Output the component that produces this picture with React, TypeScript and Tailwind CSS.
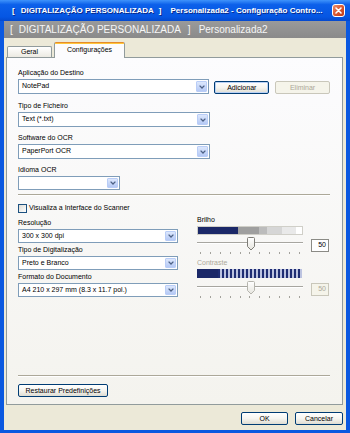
import React from 'react'

// small XP-style helpers

function Label({ children, disabled }: { children: React.ReactNode; disabled?: boolean }) {
    return (
        <div className={`h-[9px] text-[7px] leading-[9px] whitespace-nowrap ${disabled ? 'text-[#aca899]' : 'text-black'}`}>
            {children}
        </div>
    )
}

function Combo({ value, className }: { value: string; className: string }) {
    return (
        <div className={`flex items-stretch border border-[#7f9db9] bg-white p-px ${className}`}>
            <span className="flex flex-1 items-center overflow-hidden whitespace-nowrap pl-[2px] text-[7px] text-black">{value}</span>
            <span className="flex w-[11px] items-center justify-center rounded-[1px] border border-[#b9cdf7] bg-gradient-to-b from-[#dce7fc] to-[#b5c9f5]">
                <svg width="6" height="4" viewBox="0 0 6 4">
                    <path d="M0.6 0.6 L3 3 L5.4 0.6" stroke="#4d6185" strokeWidth="1.3" fill="none" />
                </svg>
            </span>
        </div>
    )
}

function XpButton({ children, className, disabled }: { children: React.ReactNode; className: string; disabled?: boolean }) {
    return (
        <div
            className={`flex items-center justify-center rounded-[2px] border text-[7px] leading-none ${
                disabled
                    ? 'border-[#c9c7ba] bg-[#f5f4ea] text-[#aca899]'
                    : 'border-[#003c74] bg-gradient-to-b from-white via-[#f6f5f0] to-[#dedcd2] text-black'
            } ${className}`}
        >
            {children}
        </div>
    )
}

function Slider({ disabled }: { disabled?: boolean }) {
    return (
        <div className="flex items-start">
            <div className="relative h-[17px] w-[106px]">
                <div className="mt-[5px] h-px w-full bg-[#a7a6a0]" />
                <div className="h-px w-full bg-white" />
                <div className="mt-[8px] flex justify-between px-[3px]">
                    {Array.from({ length: 11 }).map((_, i) => (
                        <span key={i} className="h-[2px] w-px bg-[#a3a29c]" />
                    ))}
                </div>
                {/* thumb */}
                <svg className="absolute left-[50px] top-0" width="8" height="14" viewBox="0 0 8 14">
                    <defs>
                        <linearGradient id={disabled ? 'tg2' : 'tg1'} x1="0" y1="0" x2="0" y2="1">
                            <stop offset="0" stopColor="#ffffff" />
                            <stop offset="1" stopColor="#e6e5de" />
                        </linearGradient>
                    </defs>
                    <path
                        d="M0.5 1.5 Q0.5 0.5 1.5 0.5 H6.5 Q7.5 0.5 7.5 1.5 V9.5 L4 13 L0.5 9.5 Z"
                        fill={`url(#${disabled ? 'tg2' : 'tg1'})`}
                        stroke={disabled ? '#b5b4ad' : '#7e7d77'}
                        strokeWidth="1"
                    />
                </svg>
            </div>
            <div
                className={`ml-[8px] mt-[2px] flex h-[13px] w-[18px] items-center justify-end border pr-[2px] text-[7px] ${
                    disabled ? 'border-[#c9c7ba] bg-[#f5f4ea] text-[#aca899]' : 'border-[#8b8b86] bg-white text-black'
                }`}
            >
                50
            </div>
        </div>
    )
}

function BrightnessBar() {
    return (
        <div className="flex h-[9px] w-[106px] border border-[#d0cfc8]">
            <span className="w-[40px] bg-[#1b2868]" />
            <span className="w-[21px] bg-[#9f9f9f]" />
            <span className="w-[8px] bg-[#bcbcbc]" />
            <span className="w-[15px] bg-[#d6d6d6]" />
            <span className="w-[14px] bg-[#e9e9e9]" />
            <span className="flex-1 bg-white" />
        </div>
    )
}

function ContrastBar() {
    return (
        <div className="flex h-[9px] w-[106px]">
            <span className="w-[21px] bg-[#1b2868]" />
            {Array.from({ length: 21 }).map((_, i) => (
                <span key={i} className="flex w-[4px]">
                    <span className="w-[2px] bg-[#1f2d73]" />
                    <span className="w-[2px] bg-[#bcc3e0]" />
                </span>
            ))}
        </div>
    )
}

export default function App() {
    return (
        <div className="flex h-[433px] w-[350px] flex-col bg-[#0a58e0] font-['Liberation_Sans',Arial,sans-serif]">

            {/* Title bar */}
            <div className="flex h-[21px] items-center bg-[linear-gradient(180deg,#3f93fb_0%,#0c60ea_22%,#0556e3_80%,#0449ce_100%)] pl-[12px] pr-[5px]">
                <div className="flex flex-1 whitespace-nowrap text-[8px] font-bold text-white [text-shadow:1px_1px_0_#0a2a8a]">
                    <span>[</span>
                    <span className="ml-[6px]">DIGITALIZAÇÃO PERSONALIZADA</span>
                    <span className="ml-[5px]">]</span>
                    <span className="ml-[9px]">Personalizada2 - Configuração Contro...</span>
                </div>
                <div className="flex h-[13px] w-[13px] items-center justify-center rounded-[3px] border border-white bg-gradient-to-br from-[#ec8e6c] via-[#d9572f] to-[#bf3a17]">
                    <svg width="7" height="7" viewBox="0 0 7 7">
                        <path d="M1 1 L6 6 M6 1 L1 6" stroke="white" strokeWidth="1.6" strokeLinecap="round" />
                    </svg>
                </div>
            </div>

            {/* Window body */}
            <div className="mb-[3px] ml-[4px] mr-[4px] flex flex-1 flex-col bg-[#ece9d8]">

                {/* Gray header */}
                <div className="flex h-[17px] items-center bg-gradient-to-b from-[#9a9a9a] to-[#8a8a8a] pl-[6px] text-[10px] whitespace-nowrap text-[#f6f6f6]">
                    <span>[</span>
                    <span className="ml-[6px]">DIGITALIZAÇÃO PERSONALIZADA</span>
                    <span className="ml-[7px]">]</span>
                    <span className="ml-[8px]">Personalizada2</span>
                </div>

                {/* Tabs */}
                <div className="ml-[2px] mr-[3px] mt-[4px] flex h-[15px] items-end pl-[1px]">
                    <div className="flex h-[11px] w-[45px] items-center justify-center rounded-t-[2px] border border-b-0 border-[#919b9c] bg-gradient-to-b from-white to-[#eceae2] pt-px text-[7px] text-black">
                        Geral
                    </div>
                    <div className="relative z-10 -mb-px ml-[2px] flex h-[16px] w-[71px] flex-col rounded-t-[2px] border-x border-[#919b9c] bg-[#fcfcfe]">
                        <div className="h-[1px] rounded-t-[2px] bg-[#e68b2c]" />
                        <div className="h-[1px] bg-[#ffc73c]" />
                        <div className="flex flex-1 items-center justify-center pb-[2px] text-[7px] text-black">Configurações</div>
                    </div>
                </div>

                {/* Tab panel */}
                <div className="ml-[2px] mr-[3px] flex flex-1 flex-col border border-[#919b9c] bg-gradient-to-b from-[#fcfcfe] to-[#f4f3ee] pl-[11px] pr-[12px] pt-[10px] pb-[7px]">

                    <Label>Aplicação do Destino</Label>
                    <div className="mt-[2px] flex items-start">
                        <Combo value="NotePad" className="h-[15px] w-[192px]" />
                        <XpButton className="ml-[5px] mt-[2px] h-[13px] w-[55px] border-[#1c4e8f] shadow-[inset_0_0_0_1px_#b9d1f5]">Adicionar</XpButton>
                        <XpButton disabled className="ml-[6px] mt-[2px] h-[13px] w-[55px]">Eliminar</XpButton>
                    </div>

                    <div className="mt-[7px]"><Label>Tipo de Ficheiro</Label></div>
                    <Combo value="Text (*.txt)" className="mt-[2px] h-[15px] w-[192px]" />

                    <div className="mt-[6px]"><Label>Software do OCR</Label></div>
                    <Combo value="PaperPort OCR" className="mt-[2px] h-[15px] w-[192px]" />

                    <div className="mt-[6px]"><Label>Idioma OCR</Label></div>
                    <Combo value="" className="mt-[2px] h-[14px] w-[102px]" />

                    <div className="mt-[4px] h-px bg-[#aca899]" />
                    <div className="h-px bg-white" />

                    <div className="mt-[8px] flex h-[9px] items-center">
                        <span className="h-[9px] w-[9px] border border-[#1c5180] bg-gradient-to-br from-[#dcdbd5] to-white" />
                        <span className="ml-[2px] text-[7px] text-black">Visualiza a Interface do Scanner</span>
                    </div>

                    <div className="mt-[2px] flex items-start">
                        {/* left column */}
                        <div className="flex w-[160px] flex-col pt-[3px]">
                            <Label>Resolução</Label>
                            <Combo value="300 x 300 dpi" className="mt-[2px] h-[14px] w-[160px]" />
                            <div className="mt-[2px]"><Label>Tipo de Digitalização</Label></div>
                            <Combo value="Preto e Branco" className="mt-[2px] h-[14px] w-[160px]" />
                            <div className="mt-[2px]"><Label>Formato do Documento</Label></div>
                            <Combo value="A4 210 x 297 mm (8.3 x 11.7 pol.)" className="mt-[2px] h-[14px] w-[160px]" />
                        </div>

                        {/* right column */}
                        <div className="ml-[19px] flex flex-col">
                            <Label>Brilho</Label>
                            <div className="mt-[2px]"><BrightnessBar /></div>
                            <div className="mt-[2px]"><Slider /></div>
                            <div className="mt-[4px]"><Label disabled>Contraste</Label></div>
                            <div className="mt-[2px]"><ContrastBar /></div>
                            <div className="mt-[3px]"><Slider disabled /></div>
                        </div>
                    </div>

                    <div className="flex-1" />

                    <div className="h-px bg-[#aca899]" />
                    <div className="h-px bg-white" />
                    <XpButton className="mt-[7px] h-[13px] w-[90px] self-start">Restaurar Predefinições</XpButton>
                </div>

                {/* Footer buttons */}
                <div className="mt-[7px] mb-[5px] flex justify-end gap-[7px] pr-[3px]">
                    <XpButton className="h-[13px] w-[47px]">OK</XpButton>
                    <XpButton className="h-[13px] w-[48px]">Cancelar</XpButton>
                </div>
            </div>
        </div>
    )
}
